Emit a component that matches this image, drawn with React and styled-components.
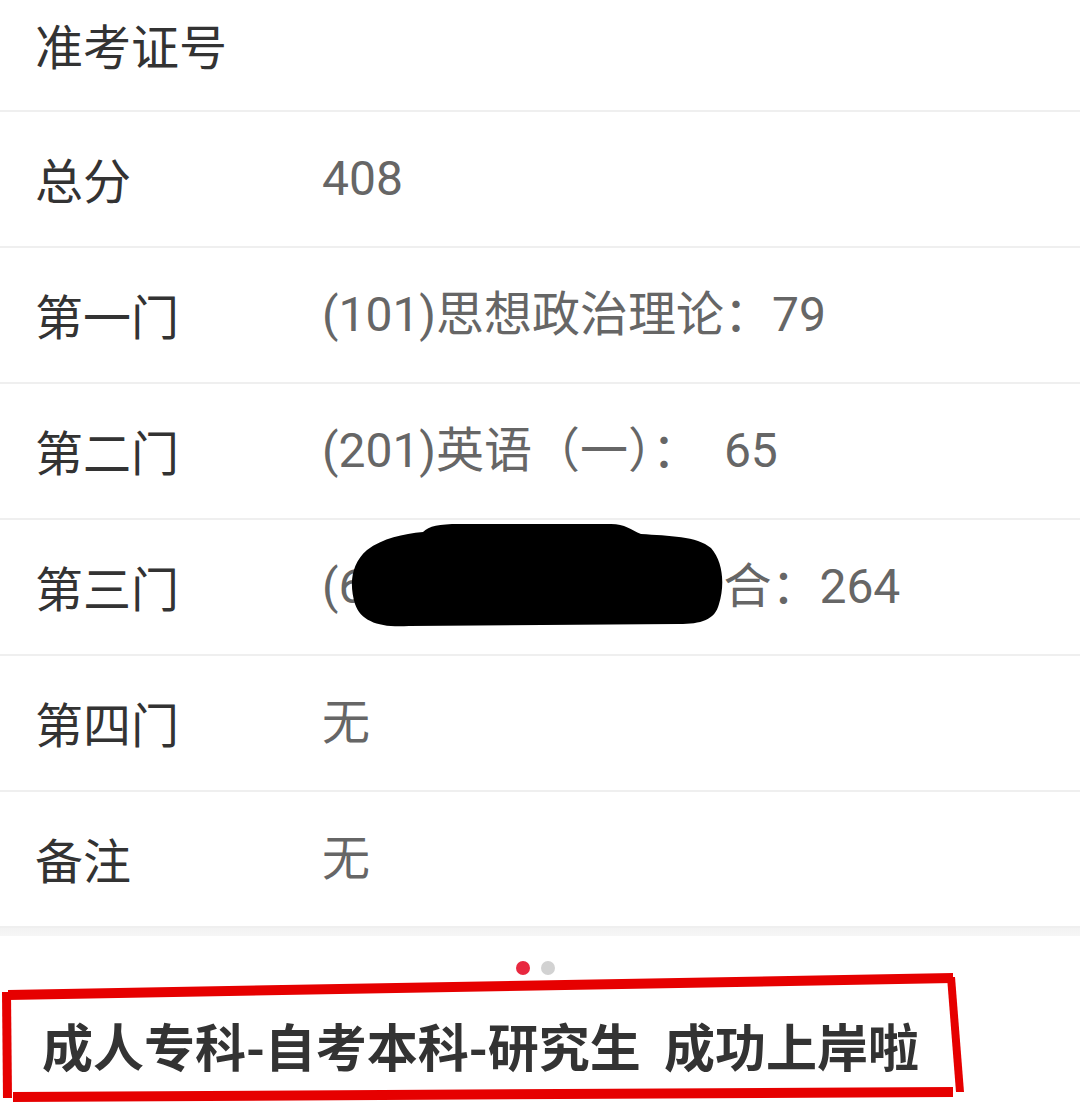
import styled, { createGlobalStyle } from "styled-components"

const GlobalStyle = createGlobalStyle`
  html, body {
    margin: 0;
    padding: 0;
    background: #ffffff;
  }
  body {
    width: 1080px;
    height: 1104px;
    overflow: hidden;
    font-family: Roboto, "Noto Sans CJK SC", sans-serif;
  }
`

const Page = styled.div`
  width: 1080px;
  height: 1104px;
  background: #fff;
  overflow: hidden;
`

const List = styled.div`
  display: flex;
  flex-direction: column;
`

const Row = styled.div`
  box-sizing: border-box;
  height: ${p => (p.$cropped ? "112px" : "136px")};
  padding: ${p => (p.$cropped ? "0 0 20px 35px" : "0 0 0 35px")};
  border-bottom: 2px solid #efefef;
  display: flex;
  align-items: center;
`

const Label = styled.div`
  width: 287px;
  flex-shrink: 0;
  font-family: "Noto Sans CJK SC", sans-serif;
  font-size: 48px;
  color: #333;
  line-height: 1.2;
`

const Value = styled.div`
  position: relative;
  font-family: Roboto, "Noto Sans CJK SC", sans-serif;
  font-size: 48px;
  color: #666;
  line-height: 1.2;
  white-space: pre;
`

const Hidden = styled.span`
  display: inline-block;
  width: ${p => p.$w}px;
`

const Blot = styled.svg`
  position: absolute;
  left: 27px;
  top: calc(50% - 63px);
  width: 376px;
  height: 104px;
`

const Band = styled.div`
  height: 8px;
  background: linear-gradient(#f2f2f2, #f6f6f6);
`

const Dots = styled.div`
  display: flex;
  justify-content: center;
  gap: 11px;
  padding: 25px 10px 0 0;
`

const Dot = styled.span`
  width: 14px;
  height: 14px;
  border-radius: 50%;
  background: ${p => (p.$active ? "#e8283f" : "#d2d2d2")};
`

const Caption = styled.div`
  position: relative;
  box-sizing: border-box;
  height: 134px;
  margin-top: -5px;
  padding: 16px 0 0 42px;
  display: flex;
  align-items: center;
`

const CaptionText = styled.div`
  position: relative;
  font-family: "Noto Sans CJK SC", sans-serif;
  font-weight: 700;
  font-size: 51px;
  color: #333;
  white-space: pre;
`

const Frame = styled.svg`
  position: absolute;
  left: 0;
  top: 0;
  width: 1080px;
  height: 134px;
`

const rows = [
  { label: "总分", value: "408" },
  { label: "第一门", value: "(101)思想政治理论：79" },
  { label: "第二门", value: "(201)英语（一）：  65" },
  { label: "第三门", redacted: true },
  { label: "第四门", value: "无" },
  { label: "备注", value: "无" },
]

const App = () => {
  return (
    <Page>
      <GlobalStyle />
      <List>
        <Row $cropped>
          <Label>准考证号</Label>
        </Row>
        {rows.map(r => (
          <Row key={r.label}>
            <Label>{r.label}</Label>
            {r.redacted ? (
              <Value>
                (6<Hidden $w={358} />合：264
                <Blot viewBox="0 0 376 104">
                  <path
                    d="M18 26 C34 14 54 10 74 8 C80 2 90 0 110 0 L262 0 C276 0 282 6 292 10 C320 12 348 12 362 24 C374 38 376 60 370 80 C366 96 352 100 330 100 L60 102 C32 104 12 98 6 80 C0 60 2 40 18 26 Z"
                    fill="#000"
                  />
                </Blot>
              </Value>
            ) : (
              <Value>{r.value}</Value>
            )}
          </Row>
        ))}
      </List>
      <Band />
      <Dots>
        <Dot $active />
        <Dot />
      </Dots>
      <Caption>
        <Frame viewBox="0 0 1080 134">
          <polygon points="8,20 953,3 953,13 8,30" fill="#e60000" />
          <polygon points="2,22 11,22 12,128 3,128" fill="#e60000" />
          <polygon points="947,7 955,7 964,122 956,122" fill="#e60000" />
          <polygon points="13,122 953,117 953,127 13,132" fill="#e60000" />
        </Frame>
        <CaptionText>成人专科-自考本科-研究生  成功上岸啦</CaptionText>
      </Caption>
    </Page>
  )
}

export default App
